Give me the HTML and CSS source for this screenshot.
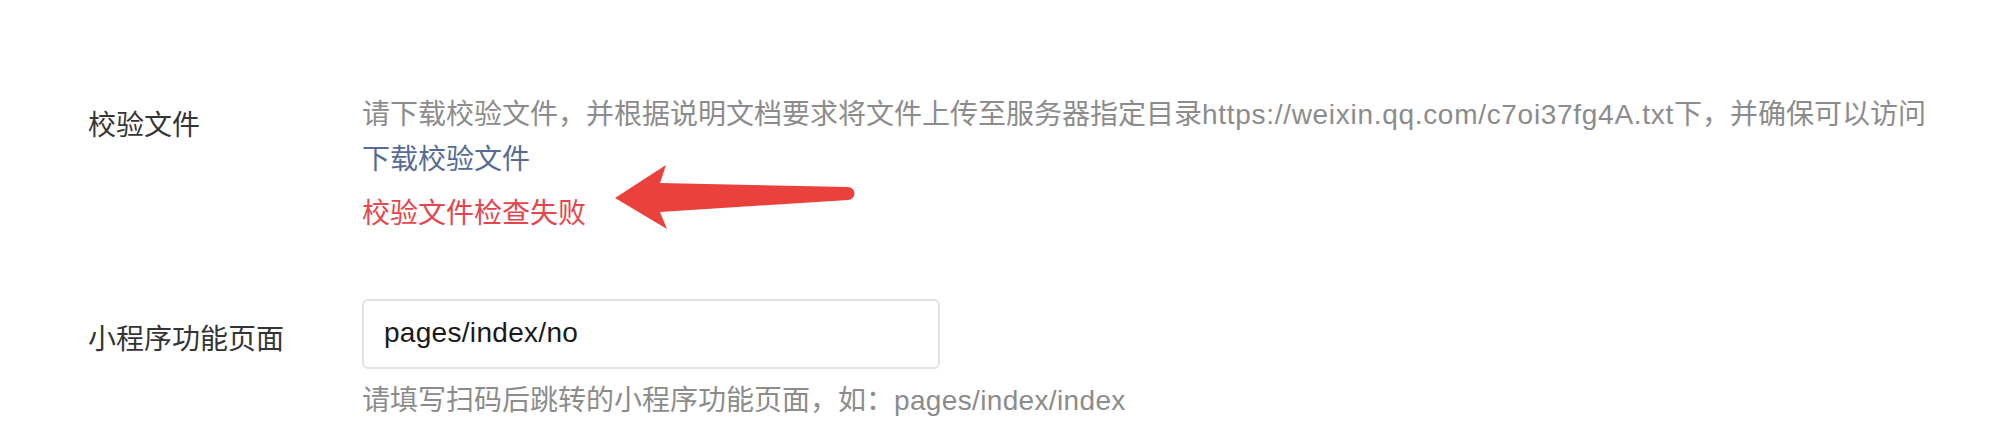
FILE: index.html
```html
<!DOCTYPE html>
<html lang="zh-CN">
<head>
<meta charset="utf-8">
<title>校验文件</title>
<link rel="stylesheet" href="styles.css">
</head>
<body>
<div class="form">
  <div class="row row-file">
    <div class="label">校验文件</div>
    <div class="content">
      <p class="desc">请下载校验文件，并根据说明文档要求将文件上传至服务器指定目录<span class="latin">https://weixin.qq.com/c7oi37fg4A.txt</span>下，并确保可以访问</p>
      <a class="link" href="#">下载校验文件</a>
      <p class="error">校验文件检查失败</p>
      <svg class="arrow" width="260" height="80" viewBox="0 0 260 80" aria-hidden="true">
        <path d="M15 43 L66 10 L60 28 L248 32 A6.5 6.5 0 0 1 248 45 L60 57 L67 74 Z" fill="#ea413c"/>
      </svg>
    </div>
  </div>
  <div class="row row-page">
    <div class="label label-page">小程序功能页面</div>
    <div class="content">
      <div class="input">pages/index/no</div>
      <p class="help">请填写扫码后跳转的小程序功能页面，如：<span class="latin latin-help">pages/index/index</span></p>
    </div>
  </div>
</div>
</body>
</html>
```

FILE: styles.css
```css
html, body {
  margin: 0;
  padding: 0;
  background: #ffffff;
}

body {
  width: 2012px;
  height: 446px;
  overflow: hidden;
  font-family: "Liberation Sans", "Noto Sans CJK SC", sans-serif;
  font-size: 28px;
}

.form {
  padding: 93px 0 0 88px;
  display: flex;
  flex-direction: column;
}

.row {
  display: flex;
}

.label {
  width: 274px;
  flex: none;
  color: #353535;
  line-height: 44px;
  padding-top: 11px;
}

.content {
  position: relative;
  display: flex;
  flex-direction: column;
  align-items: flex-start;
}

.desc {
  margin: 0;
  color: #8c8c8c;
  line-height: 44px;
  white-space: nowrap;
}

.latin {
  letter-spacing: 0.7px;
}

.latin-help {
  letter-spacing: 0.35px;
}

.link {
  color: #576b95;
  text-decoration: none;
  line-height: 44px;
  margin-top: 1px;
}

.error {
  margin: 10px 0 0;
  color: #e5454b;
  line-height: 44px;
}

.arrow {
  position: absolute;
  left: 238px;
  top: 62px;
}

.row-page {
  margin-top: 63px;
}

.label-page {
  line-height: 70px;
  padding-top: 6px;
}

.input {
  box-sizing: border-box;
  width: 578px;
  height: 70px;
  border: 2px solid #e3e3e6;
  border-radius: 6px;
  padding: 0 20px;
  color: #1a1a1a;
  line-height: 64px;
  letter-spacing: 0.3px;
}

.help {
  margin: 10px 0 0;
  color: #8c8c8c;
  line-height: 44px;
}
```
